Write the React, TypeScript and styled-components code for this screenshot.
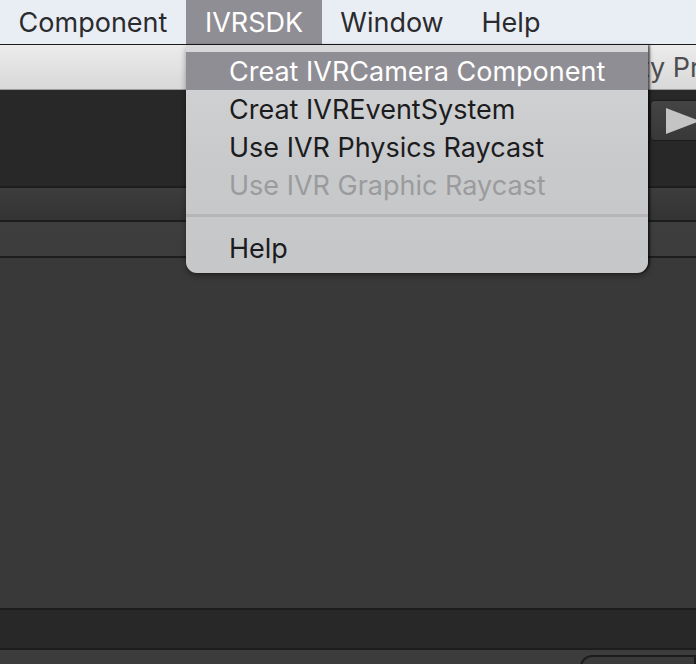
import React from "react";
import styled, { createGlobalStyle } from "styled-components";

const Global = createGlobalStyle`
  html, body { margin: 0; padding: 0; background: #282828; }
  body { font-family: Inter, "Noto Sans", sans-serif; overflow: hidden; }
  #root { width: 696px; height: 664px; }
`;

const Screen = styled.div`
  position: relative;
  width: 696px;
  height: 664px;
  display: flex;
  flex-direction: column;
  background: #282828;
  overflow: hidden;
`;

const MenuBar = styled.div`
  height: 44px;
  display: flex;
  align-items: stretch;
  background: #e9eef5;
  border-bottom: 1px solid #1c1c1c;
  flex-shrink: 0;
`;

const MenuItem = styled.div<{ $active?: boolean; $w: number }>`
  width: ${(p) => p.$w}px;
  display: flex;
  align-items: center;
  justify-content: center;
  font-size: 27px;
  color: ${(p) => (p.$active ? "#ffffff" : "#2b2b2e")};
  background: ${(p) => (p.$active ? "#8f8e94" : "transparent")};
`;

const Toolbar = styled.div`
  height: 44px;
  flex-shrink: 0;
  display: flex;
  align-items: center;
  background: linear-gradient(#ececec, #d8d8d8);
  border-bottom: 1px solid #9d9d9d;
  overflow: hidden;
`;

const ToolbarLabel = styled.span`
  font-size: 27px;
  color: #4d4d4f;
  white-space: nowrap;
  margin-left: 598px;
`;

const PlayArea = styled.div`
  height: 96px;
  flex-shrink: 0;
  background: #282828;
  display: flex;
  justify-content: flex-end;
  align-items: flex-start;
  padding-top: 10px;
  box-sizing: border-box;
`;

const PlayButton = styled.div`
  width: 54px;
  height: 41px;
  margin-right: -8px;
  box-sizing: border-box;
  border: 1px solid #1b1b1b;
  border-radius: 4px;
  background: linear-gradient(#444444, #383838);
  display: flex;
  align-items: center;
  padding-left: 15px;
`;

const Rule = styled.div`
  height: 2px;
  background: #1d1d1d;
  flex-shrink: 0;
`;

const Strip = styled.div<{ $h: number; $top: string; $bottom: string }>`
  height: ${(p) => p.$h}px;
  flex-shrink: 0;
  background: linear-gradient(${(p) => p.$top}, ${(p) => p.$bottom});
`;

const Body = styled.div`
  height: 350px;
  flex-shrink: 0;
  background: #393939;
`;

const Footer = styled.div`
  flex: 1;
  background: #3c3c3c;
  display: flex;
  justify-content: flex-end;
  padding-top: 5px;
`;

const SearchField = styled.div`
  width: 116px;
  height: 30px;
  border: 2px solid #1c1c1c;
  border-bottom: none;
  border-radius: 12px 0 0 0;
  background: #3a3a3a;
  box-sizing: border-box;
  padding: 4px 0 0 10px;
`;

const Dropdown = styled.div`
  position: absolute;
  left: 186px;
  top: 45px;
  width: 462px;
  height: 228px;
  box-sizing: border-box;
  padding-top: 7px;
  background: linear-gradient(#d9d9db 0px, #d2d3d5 20px, #c8c9cb 120px, #c6c7c9);
  border-radius: 0 0 11px 11px;
  box-shadow: 2px 0 2px rgba(0, 0, 0, 0.55), 0 3px 6px rgba(0, 0, 0, 0.35);
  display: flex;
  flex-direction: column;
`;

const DropItem = styled.div<{ $active?: boolean; $disabled?: boolean }>`
  height: 38px;
  display: flex;
  align-items: center;
  padding-left: 43px;
  font-size: 27px;
  color: ${(p) => (p.$active ? "#ffffff" : p.$disabled ? "#9b9b9d" : "#1c1c1e")};
  background: ${(p) => (p.$active ? "#8f8e94" : "transparent")};
  white-space: nowrap;
`;

const Separator = styled.div`
  height: 3px;
  background: #b6b6b8;
  margin: 10px 0 12px;
`;

export default function App() {
  return (
    <Screen>
      <Global />
      <MenuBar>
        <MenuItem $w={186}>Component</MenuItem>
        <MenuItem $w={136} $active>
          IVRSDK
        </MenuItem>
        <MenuItem $w={140}>Window</MenuItem>
        <MenuItem $w={98}>Help</MenuItem>
      </MenuBar>
      <Toolbar>
        <ToolbarLabel>Unity Pro</ToolbarLabel>
      </Toolbar>
      <PlayArea>
        <PlayButton>
          <svg width="34" height="26" viewBox="0 0 34 26">
            <polygon points="0,0 34,13 0,26" fill="#c4c4c4" />
          </svg>
        </PlayButton>
      </PlayArea>
      <Rule />
      <Strip $h={32} $top="#3d3d3d" $bottom="#333333" />
      <Rule />
      <Strip $h={34} $top="#3e3e3e" $bottom="#3c3c3c" />
      <Rule />
      <Body />
      <Rule />
      <Strip $h={38} $top="#282828" $bottom="#282828" />
      <Rule />
      <Footer>
        <SearchField>
          <svg width="12" height="12" viewBox="0 0 12 12">
            <circle cx="6" cy="6" r="4" fill="none" stroke="#6a6a6a" strokeWidth="2" />
          </svg>
        </SearchField>
      </Footer>
      <Dropdown>
        <DropItem $active>Creat IVRCamera Component</DropItem>
        <DropItem>Creat IVREventSystem</DropItem>
        <DropItem>Use IVR Physics Raycast</DropItem>
        <DropItem $disabled>Use IVR Graphic Raycast</DropItem>
        <Separator />
        <DropItem>Help</DropItem>
      </Dropdown>
    </Screen>
  );
}
